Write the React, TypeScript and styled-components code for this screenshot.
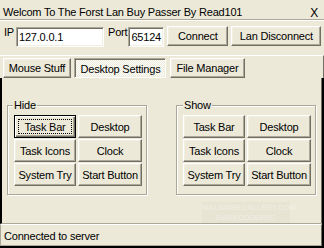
import * as React from "react";
import styled, { createGlobalStyle, css } from "styled-components";

const colors = {
  face: "#ece9d8",
  light: "#f1efe2",
  highlight: "#ffffff",
  shadow: "#aca899",
  darkShadow: "#716f64",
  frame: "#000000",
};

const GlobalStyle = createGlobalStyle`
  html, body {
    margin: 0;
    padding: 0;
    background: ${colors.face};
  }
  body {
    font-family: "Liberation Sans", Arial, sans-serif;
    font-size: 11px;
    letter-spacing: -0.2px;
    color: #000;
  }
  * { box-sizing: border-box; }
`;

const raised = css`
  border: 1px solid;
  border-color: ${colors.highlight} ${colors.darkShadow} ${colors.darkShadow} ${colors.highlight};
  box-shadow: inset -1px -1px 0 ${colors.shadow}, inset 1px 1px 0 ${colors.light};
`;

const sunken = css`
  border: 1px solid;
  border-color: ${colors.shadow} ${colors.highlight} ${colors.highlight} ${colors.shadow};
  box-shadow: inset 1px 1px 0 ${colors.darkShadow}, inset -1px -1px 0 ${colors.light};
`;

const Window = styled.div`
  width: 324px;
  height: 248px;
  display: flex;
  flex-direction: column;
  background: ${colors.face};
  overflow: hidden;
`;

const TitleBar = styled.div`
  height: 20px;
  display: flex;
  justify-content: space-between;
  align-items: flex-start;
  padding: 6px 6px 0 3px;
  line-height: 13px;
  border-bottom: 1px solid ${colors.shadow};
  box-shadow: 0 1px 0 ${colors.highlight};
`;

const CloseGlyph = styled.span`
  font-size: 12px;
  padding-top: 1px;
`;

const ConnRow = styled.div`
  height: 35px;
  display: flex;
  align-items: flex-start;
  padding: 6px 0 0 3px;
  line-height: 13px;
`;

const FieldLabel = styled.span<{ $gap: number }>`
  margin-right: ${(p) => p.$gap}px;
  margin-left: 1px;
`;

const TextBox = styled.input<{ $width: number; $after: number }>`
  ${sunken};
  width: ${(p) => p.$width}px;
  height: 20px;
  margin: 1px ${(p) => p.$after}px 0 0;
  padding: 0 0 0 2px;
  background: #fff;
  font: inherit;
  letter-spacing: inherit;
  color: #000;
  outline: none;
`;

const PushButton = styled.button<{ $width: number; $after?: number }>`
  ${raised};
  width: ${(p) => p.$width}px;
  height: 20px;
  margin-right: ${(p) => p.$after || 0}px;
  padding: 0;
  background: ${colors.face};
  font: inherit;
  letter-spacing: inherit;
  color: #000;
`;

const TabStrip = styled.div`
  height: 23px;
  display: flex;
  align-items: flex-start;
  padding: 2px 0 0 3px;
  border-top: 1px solid ${colors.highlight};
  border-right: 1px solid ${colors.darkShadow};
`;

const TabButton = styled.div<{ $width: number; $after: number; $active?: boolean }>`
  width: ${(p) => p.$width}px;
  height: 20px;
  margin-right: ${(p) => p.$after}px;
  display: flex;
  align-items: center;
  justify-content: center;
  ${(p) =>
    p.$active
      ? css`
          ${sunken};
          padding: 1px 0 0 1px;
          background-color: ${colors.face};
          background-image: repeating-conic-gradient(
            ${colors.highlight} 0 25%,
            ${colors.face} 0 50%
          );
          background-size: 2px 2px;
        `
      : raised}
`;

const Lower = styled.div`
  flex: 1;
  display: flex;
  flex-direction: column;
  border-right: 2px solid ${colors.frame};
  border-bottom: 2px solid ${colors.frame};
`;

const TabPage = styled.div`
  flex: 1;
  position: relative;
  display: flex;
  align-items: flex-start;
  gap: 29px;
  padding: 27px 0 0 5px;
  border-left: 2px solid ${colors.frame};
  border-bottom: 1px solid ${colors.shadow};
  box-shadow: inset -1px 0 0 ${colors.darkShadow};
`;

const Group = styled.div`
  position: relative;
  width: 140px;
  height: 90px;
  padding: 9px 0 0 6px;
  border: 1px solid ${colors.shadow};
  box-shadow: inset 1px 1px 0 ${colors.highlight}, 1px 1px 0 ${colors.highlight};
`;

const Caption = styled.span<{ $left: number }>`
  position: absolute;
  top: -7px;
  left: ${(p) => p.$left}px;
  padding: 0 1px;
  line-height: 13px;
  background: ${colors.face};
`;

const ButtonGrid = styled.div`
  display: grid;
  grid-template-columns: 62px 64px;
  grid-auto-rows: 23px;
  column-gap: 2px;
  row-gap: 1px;
`;

const GridButton = styled.button<{ $default?: boolean }>`
  position: relative;
  padding: 0;
  background: ${colors.face};
  font: inherit;
  letter-spacing: inherit;
  color: #000;
  ${raised};
  ${(p) =>
    p.$default &&
    css`
      border: 1px solid #000;
      box-shadow: inset 1px 1px 0 ${colors.highlight},
        inset -1px -1px 0 ${colors.darkShadow},
        inset -2px -2px 0 ${colors.shadow};
      &::after {
        content: "";
        position: absolute;
        inset: 3px;
        border: 1px dotted #000;
      }
    `}
`;

const Watermark = styled.div`
  position: absolute;
  left: 200px;
  top: 124px;
  width: 88px;
  padding: 1px 0;
  text-align: center;
  font-weight: bold;
  font-size: 8px;
  line-height: 10px;
  letter-spacing: -0.3px;
  color: rgba(255, 255, 255, 0.3);
  background: rgba(0, 0, 0, 0.02);
`;

const StatusBar = styled.div`
  height: 22px;
  padding: 5px 0 0 3px;
  line-height: 13px;
  border-top: 1px solid ${colors.highlight};
  border-left: 1px solid ${colors.shadow};
  border-bottom: 1px solid ${colors.shadow};
  border-right: 1px solid ${colors.darkShadow};
`;

interface ToggleGroupProps {
  title: string;
  captionLeft: number;
  focusFirst?: boolean;
}

const ACTIONS = ["Task Bar", "Desktop", "Task Icons", "Clock", "System Try", "Start Button"];

function ToggleGroup({ title, captionLeft, focusFirst }: ToggleGroupProps) {
  return (
    <Group>
      <Caption $left={captionLeft}>{title}</Caption>
      <ButtonGrid>
        {ACTIONS.map((label, i) => (
          <GridButton key={label} $default={focusFirst && i === 0}>
            {label}
          </GridButton>
        ))}
      </ButtonGrid>
    </Group>
  );
}

export default function App() {
  return (
    <>
      <GlobalStyle />
      <Window>
        <TitleBar>
          <span>Welcom To The Forst Lan Buy Passer By Read101</span>
          <CloseGlyph>X</CloseGlyph>
        </TitleBar>
        <ConnRow>
          <FieldLabel $gap={2}>IP</FieldLabel>
          <TextBox $width={88} $after={3} readOnly defaultValue="127.0.0.1" />
          <FieldLabel $gap={1}>Port</FieldLabel>
          <TextBox $width={36} $after={3} readOnly defaultValue="65124" />
          <PushButton $width={61} $after={3}>Connect</PushButton>
          <PushButton $width={90}>Lan Disconnect</PushButton>
        </ConnRow>
        <TabStrip>
          <TabButton $width={68} $after={3}>Mouse Stuff</TabButton>
          <TabButton $width={92} $after={4} $active>
            Desktop Settings
          </TabButton>
          <TabButton $width={75} $after={0}>File Manager</TabButton>
        </TabStrip>
        <Lower>
          <TabPage>
            <ToggleGroup title="Hide" captionLeft={5} focusFirst />
            <ToggleGroup title="Show" captionLeft={6} />
            <Watermark>
              MALWAREGALLERY.COM
              <br />
              DARKCODERSC
            </Watermark>
          </TabPage>
          <StatusBar>Connected to server</StatusBar>
        </Lower>
      </Window>
    </>
  );
}
